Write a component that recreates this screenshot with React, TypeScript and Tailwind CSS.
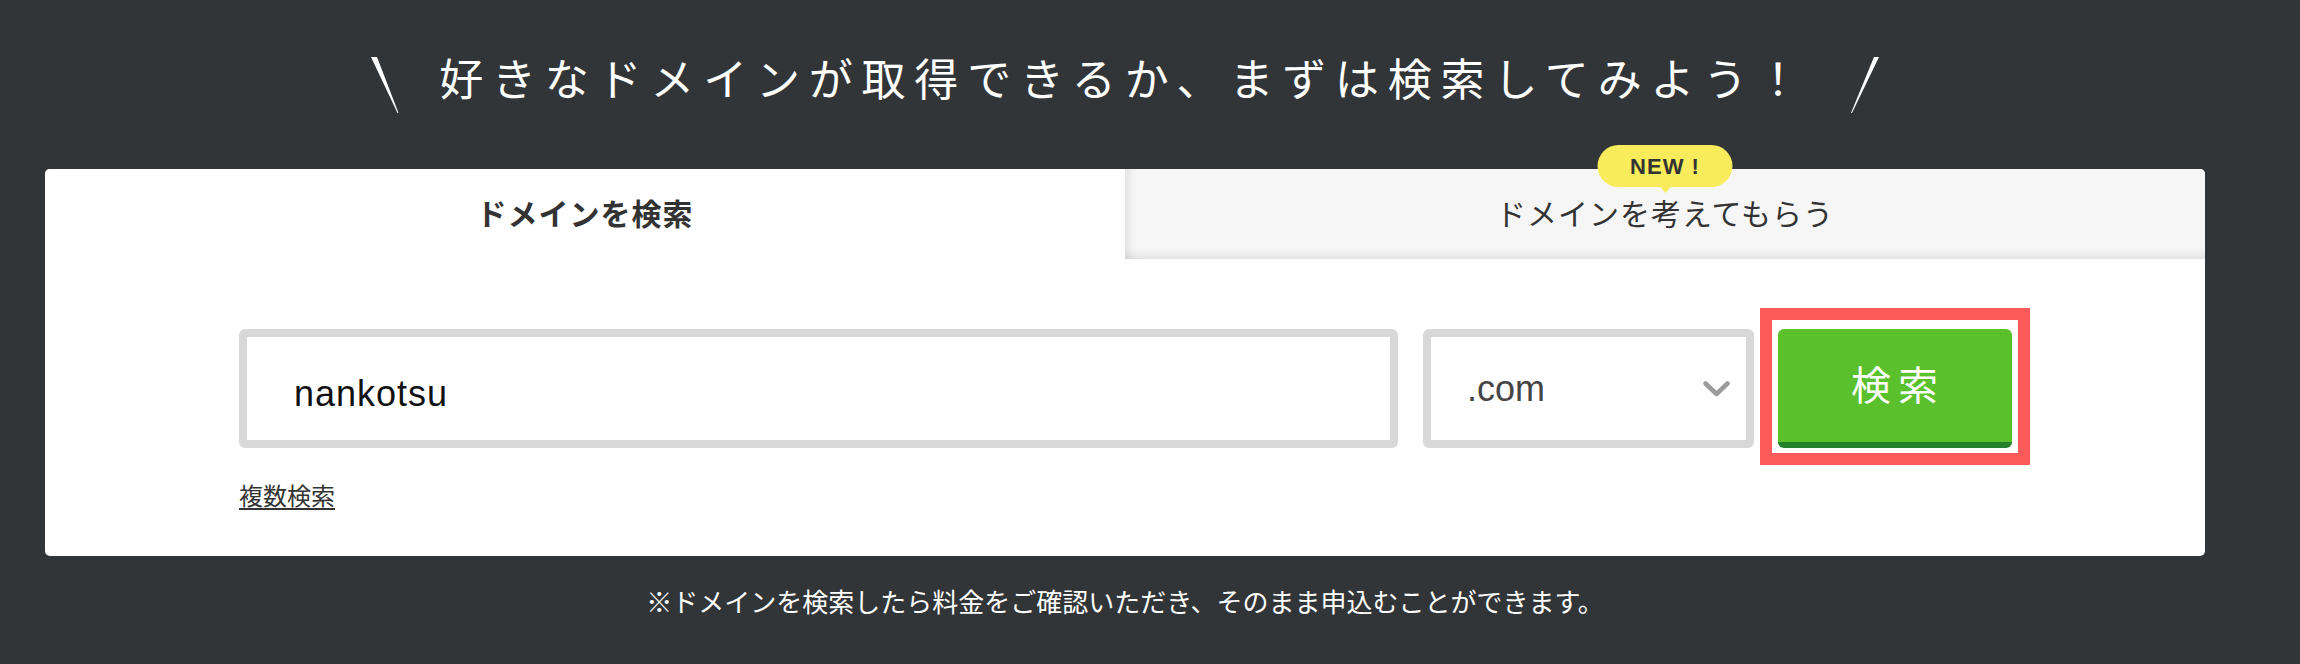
const jp = "font-['Liberation_Sans','Noto_Sans_CJK_JP',sans-serif]";

function SlashLeft() {
  return (
    <svg width="28" height="56" viewBox="0 0 28 56" className="shrink-0">
      <polygon points="0,0 6,0 27.5,56 26.5,56" fill="#fff" />
    </svg>
  );
}

function SlashRight() {
  return (
    <svg width="28" height="56" viewBox="0 0 28 56" className="shrink-0">
      <polygon points="23,0 28,0 1,56 0,56" fill="#fff" />
    </svg>
  );
}

function Chevron() {
  return (
    <svg width="27" height="16" viewBox="0 0 27 16" className="shrink-0">
      <polyline
        points="2.5,2.5 13.5,13 24.5,2.5"
        fill="none"
        stroke="#9b9b9b"
        strokeWidth="4.5"
        strokeLinecap="round"
        strokeLinejoin="round"
      />
    </svg>
  );
}

export default function App() {
  return (
    <div className={`h-[664px] w-[2300px] overflow-hidden bg-[#323538] ${jp}`}>
      <div className="flex w-[2250px] flex-col items-center pt-[57px]">
        {/* heading */}
        <div className="flex h-[56px] items-center">
          <SlashLeft />
          <span className="mb-[8px] ml-[40px] mr-[42px] text-[44px] leading-none tracking-[0.2em] text-white">
            好きなドメインが取得できるか、まずは検索してみよう！
          </span>
          <SlashRight />
        </div>

        {/* card */}
        <div className="mt-[56px] w-[2160px] rounded-[5px] bg-white">
          <div className="flex h-[90px]">
            <div className="flex flex-1 items-center justify-center rounded-tl-[5px] bg-white text-[30px] font-bold tracking-[1px] text-[#333]">
              ドメインを検索
            </div>
            <div className="relative flex flex-1 items-center justify-center rounded-tr-[5px] bg-[#f6f6f6] text-[30px] tracking-[1px] text-[#333] shadow-[inset_12px_0_10px_-8px_rgba(0,0,0,0.09),inset_0_-12px_10px_-8px_rgba(0,0,0,0.09)]">
              ドメインを考えてもらう
              <div className="absolute left-1/2 top-[-24px] flex h-[42px] w-[135px] -translate-x-1/2 items-center justify-center rounded-full bg-[#f8ec5c] text-[22px] font-bold text-[#333]">
                NEW !
                <span className="absolute left-1/2 top-[41px] h-0 w-0 -translate-x-1/2 border-x-[6px] border-t-[7px] border-x-transparent border-t-[#f8ec5c]" />
              </div>
            </div>
          </div>

          <div className="pb-[44px] pl-[194px] pt-[70px]">
            <div className="flex items-stretch">
              <input
                readOnly
                defaultValue="nankotsu"
                className="h-[119px] w-[1159px] rounded-[6px] border-[8px] border-[#d8d8d8] bg-white pl-[47px] pt-[10px] text-[36px] tracking-[1px] text-[#111] outline-none"
              />
              <div className="ml-[25px] flex h-[119px] w-[331px] items-center justify-between rounded-[6px] border-[8px] border-[#d8d8d8] bg-white pl-[36px] pr-[16px]">
                <span className="text-[36px] text-[#444]">.com</span>
                <Chevron />
              </div>
              <div className="relative ml-[24px]">
                <button className="flex h-[119px] w-[234px] items-center justify-center rounded-[6px] border-b-[6px] border-[#22812a] bg-[#5ac02c] pl-[6px] text-[40px] tracking-[7px] text-white">
                  検索
                </button>
                <div className="pointer-events-none absolute -bottom-[17px] -left-[18px] -right-[18px] -top-[21px] border-[12px] border-[#ff5a5a]" />
              </div>
            </div>
            <div className="mt-[34px] h-[30px] text-[24px] leading-[30px] text-[#333]">
              <a className="underline underline-offset-[3px]">複数検索</a>
            </div>
          </div>
        </div>

        {/* footer note */}
        <p className="mt-[29px] text-[26px] leading-[36px] text-white">
          ※ドメインを検索したら料金をご確認いただき、そのまま申込むことができます。
        </p>
      </div>
    </div>
  );
}
